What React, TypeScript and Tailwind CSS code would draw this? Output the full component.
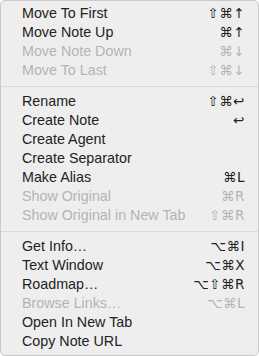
type Item = { label: string; keys?: string; disabled?: boolean } | "sep";

const ITEMS: Item[] = [
  { label: "Move To First", keys: "⇧⌘↑" },
  { label: "Move Note Up", keys: "⌘↑" },
  { label: "Move Note Down", keys: "⌘↓", disabled: true },
  { label: "Move To Last", keys: "⇧⌘↓", disabled: true },
  "sep",
  { label: "Rename", keys: "⇧⌘↩" },
  { label: "Create Note", keys: "↩" },
  { label: "Create Agent" },
  { label: "Create Separator" },
  { label: "Make Alias", keys: "⌘L" },
  { label: "Show Original", keys: "⌘R", disabled: true },
  { label: "Show Original in New Tab", keys: "⇧⌘R", disabled: true },
  "sep",
  { label: "Get Info…", keys: "⌥⌘I" },
  { label: "Text Window", keys: "⌥⌘X" },
  { label: "Roadmap…", keys: "⌥⇧⌘R" },
  { label: "Browse Links…", keys: "⌥⌘L", disabled: true },
  { label: "Open In New Tab" },
  { label: "Copy Note URL" },
];

export default function App() {
  return (
    <div className="h-[356px] w-[259px] overflow-hidden bg-white">
      <div
        className="flex h-[356px] w-[259px] flex-col rounded-[5px] border border-[#c9c9c9] bg-[#eeeeee] pt-[3px] pb-[4px] text-[14.3px] leading-[19px]"
        style={{ fontFamily: '"Liberation Sans", Arial, sans-serif' }}
      >
        {ITEMS.map((item, i) =>
          item === "sep" ? (
            <div key={i} className="flex h-[12px] items-center">
              <div className="h-px w-full bg-[#d9d9d9]" />
            </div>
          ) : (
            <div
              key={i}
              className={`flex h-[19px] items-center justify-between pl-[21px] pr-[13px] ${
                item.disabled ? "text-[#b4b4b4]" : "text-[#222222]"
              }`}
            >
              <span className="whitespace-nowrap">{item.label}</span>
              {item.keys && (
                <span
                  className="whitespace-nowrap text-[13.5px] tracking-[0.5px]"
                  style={{ fontFamily: '"DejaVu Sans", sans-serif' }}
                >
                  {item.keys}
                </span>
              )}
            </div>
          )
        )}
      </div>
    </div>
  );
}
